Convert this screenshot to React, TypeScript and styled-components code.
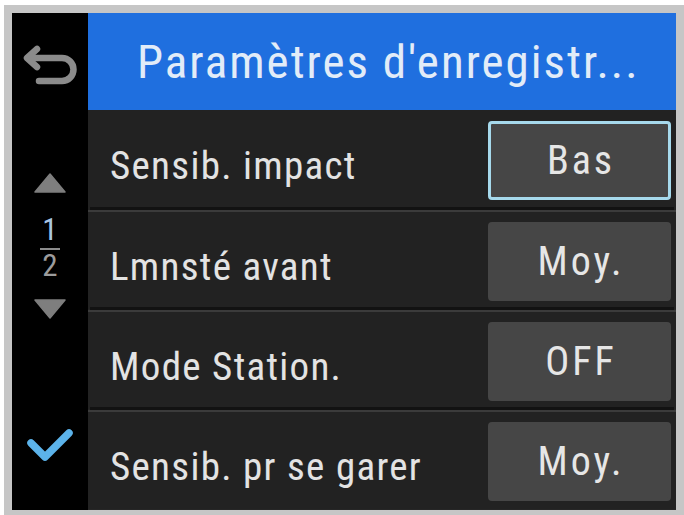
import React from 'react'
import styled, { createGlobalStyle } from 'styled-components'

const font = '"Roboto Condensed", Roboto, "Liberation Sans", sans-serif'

const Global = createGlobalStyle`
  html, body { margin: 0; background: #ffffff; }
  body { font-family: ${font}; }
`

const Page = styled.div`
  width: 684px;
  height: 515px;
  box-sizing: border-box;
  padding: 5px 0 0 4px;
  background: #ffffff;
`

const Bezel = styled.div`
  width: 680px;
  height: 510px;
  box-sizing: border-box;
  border: 8px solid #c6c6c6;
  border-bottom-width: 5px;
  display: grid;
  grid-template-columns: 76px 1fr;
  grid-template-rows: 97px 1fr;
  background: #1f1f1f;
`

const Sidebar = styled.div`
  grid-row: 1 / span 2;
  background: #000000;
  display: flex;
  flex-direction: column;
  align-items: center;
`

const BackSlot = styled.div`
  height: 97px;
  width: 100%;
  display: flex;
  align-items: center;
  justify-content: center;
  padding-top: 6px;
  box-sizing: border-box;
`

const Pager = styled.div`
  margin-top: 63px;
  display: flex;
  flex-direction: column;
  align-items: center;
`

const Fraction = styled.div`
  margin: 24px 0 20px;
  display: flex;
  flex-direction: column;
  align-items: center;
  font-size: 31px;
  line-height: 26px;
`

const Digit = styled.span<{ $active?: boolean }>`
  color: ${(p) => (p.$active ? '#a9c6e4' : '#9c9c9c')};
`

const FractionBar = styled.span`
  width: 20px;
  height: 2px;
  margin: 5px 0 3px;
  background: #8c8c8c;
`

const CheckSlot = styled.div`
  margin-top: auto;
  margin-bottom: 46px;
  display: flex;
`

const Header = styled.div`
  background: #1f6fdf;
  display: flex;
  align-items: center;
  padding-left: 49px;
  color: #e2ecf8;
  font-size: 47px;
  letter-spacing: 2px;
  white-space: nowrap;
  overflow: hidden;
`

const List = styled.div`
  display: flex;
  flex-direction: column;
`

const Row = styled.div<{ $first?: boolean }>`
  height: 100px;
  box-sizing: border-box;
  display: flex;
  align-items: center;
  justify-content: space-between;
  padding: 0 5px 0 22px;
  background: #222222;
  border-top: ${(p) => (p.$first ? 'none' : '2px solid #3b3b3b')};
  box-shadow: ${(p) => (p.$first ? 'none' : 'inset 0 -1px 0 #262626, 0 -5px 0 -2px #121212')};
`

const Label = styled.span`
  color: #e3e3e3;
  font-size: 39px;
  letter-spacing: 1.3px;
  padding-top: 11px;
  white-space: nowrap;
`

const Value = styled.div<{ $selected?: boolean }>`
  width: 183px;
  height: 79px;
  box-sizing: border-box;
  padding-left: 3px;
  border-radius: 4px;
  background: #464646;
  border: 3px solid ${(p) => (p.$selected ? '#a6d9ec' : '#464646')};
  display: flex;
  align-items: center;
  justify-content: center;
  color: #e6e6e6;
  font-size: 40px;
  letter-spacing: 3px;
`

const BackIcon = () => (
  <svg width="54" height="40" viewBox="0 0 54 40" fill="none">
    <path d="M14 4 L4 13 L14 22" stroke="#8b8b8b" strokeWidth="6.5" strokeLinecap="round" strokeLinejoin="round" />
    <path d="M5 13 H39 A11.5 11.5 0 0 1 39 36 H16" stroke="#8b8b8b" strokeWidth="6.5" strokeLinecap="round" />
  </svg>
)

const Triangle = ({ down }: { down?: boolean }) => (
  <svg width="32" height="20" viewBox="0 0 32 20">
    <path d={down ? 'M1 1 H31 L16 19 Z' : 'M1 19 H31 L16 1 Z'} fill="#7e7e7e" strokeLinejoin="round" stroke="#7e7e7e" strokeWidth="1.5" />
  </svg>
)

const CheckIcon = () => (
  <svg width="48" height="36" viewBox="0 0 48 36" fill="none">
    <path d="M5 15 L19 29 L43 5" stroke="#5cb3ea" strokeWidth="7.5" strokeLinecap="round" strokeLinejoin="round" />
  </svg>
)

const items = [
  { label: 'Sensib. impact', value: 'Bas', selected: true },
  { label: 'Lmnsté avant', value: 'Moy.' },
  { label: 'Mode Station.', value: 'OFF' },
  { label: 'Sensib. pr se garer', value: 'Moy.' },
]

export default function App() {
  return (
    <Page>
      <Global />
      <Bezel>
        <Sidebar>
          <BackSlot>
            <BackIcon />
          </BackSlot>
          <Pager>
            <Triangle />
            <Fraction>
              <Digit $active>1</Digit>
              <FractionBar />
              <Digit>2</Digit>
            </Fraction>
            <Triangle down />
          </Pager>
          <CheckSlot>
            <CheckIcon />
          </CheckSlot>
        </Sidebar>
        <Header>Paramètres d'enregistr...</Header>
        <List>
          {items.map((it, i) => (
            <Row key={it.label} $first={i === 0}>
              <Label>{it.label}</Label>
              <Value $selected={it.selected}>{it.value}</Value>
            </Row>
          ))}
        </List>
      </Bezel>
    </Page>
  )
}
